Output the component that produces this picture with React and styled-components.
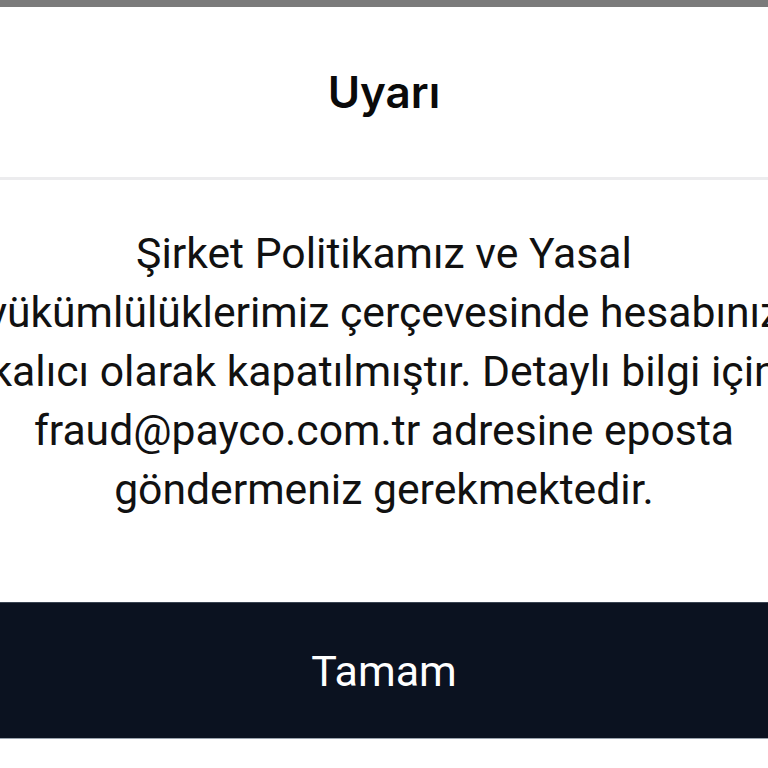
import React from 'react'
import styled, { createGlobalStyle } from 'styled-components'

const GlobalStyle = createGlobalStyle`
    html, body {
        margin: 0;
        padding: 0;
        background: #ffffff;
        overflow: hidden;
    }
`

const lines = [
    'Şirket Politikamız ve Yasal',
    'yükümlülüklerimiz çerçevesinde hesabınız',
    'kalıcı olarak kapatılmıştır. Detaylı bilgi için',
    'fraud@payco.com.tr adresine eposta',
    'göndermeniz gerekmektedir.',
]

function App() {
    return (
        <Screen>
            <GlobalStyle />
            <StatusStrip />
            <Header>
                <Title>Uyarı</Title>
            </Header>
            <Divider />
            <Message>
                {lines.map((line) => (
                    <Line key={line}>{line}</Line>
                ))}
            </Message>
            <ConfirmButton type="button">Tamam</ConfirmButton>
        </Screen>
    )
}

export default App

const Screen = styled.div`
    width: 768px;
    height: 768px;
    display: flex;
    flex-direction: column;
    background: #ffffff;
    overflow: hidden;
`

const StatusStrip = styled.div`
    height: 7px;
    background: #7b7b7b;
    flex-shrink: 0;
`

const Header = styled.div`
    height: 170px;
    display: flex;
    align-items: center;
    justify-content: center;
    flex-shrink: 0;
`

const Title = styled.h1`
    margin: 0;
    font-family: Inter, Lato, sans-serif;
    font-weight: 600;
    font-size: 44px;
    color: #0a0a0a;
`

const Divider = styled.div`
    height: 3px;
    background: #ececee;
    flex-shrink: 0;
`

const Message = styled.div`
    padding-top: 44px;
    height: 378px;
    display: flex;
    flex-direction: column;
    align-items: center;
    flex-shrink: 0;
`

const Line = styled.div`
    white-space: nowrap;
    font-family: Roboto, "Noto Sans", sans-serif;
    font-size: 42.7px;
    line-height: 59px;
    color: #111111;
    text-align: center;
`

const ConfirmButton = styled.button`
    height: 137px;
    width: 100%;
    flex-shrink: 0;
    border: none;
    border-top: 1px solid #3a4452;
    border-bottom: 1px solid #9aa3ad;
    background: #0b1220;
    color: #ffffff;
    font-family: Roboto, "Noto Sans", sans-serif;
    font-size: 43px;
    padding: 0;
    cursor: pointer;
`
